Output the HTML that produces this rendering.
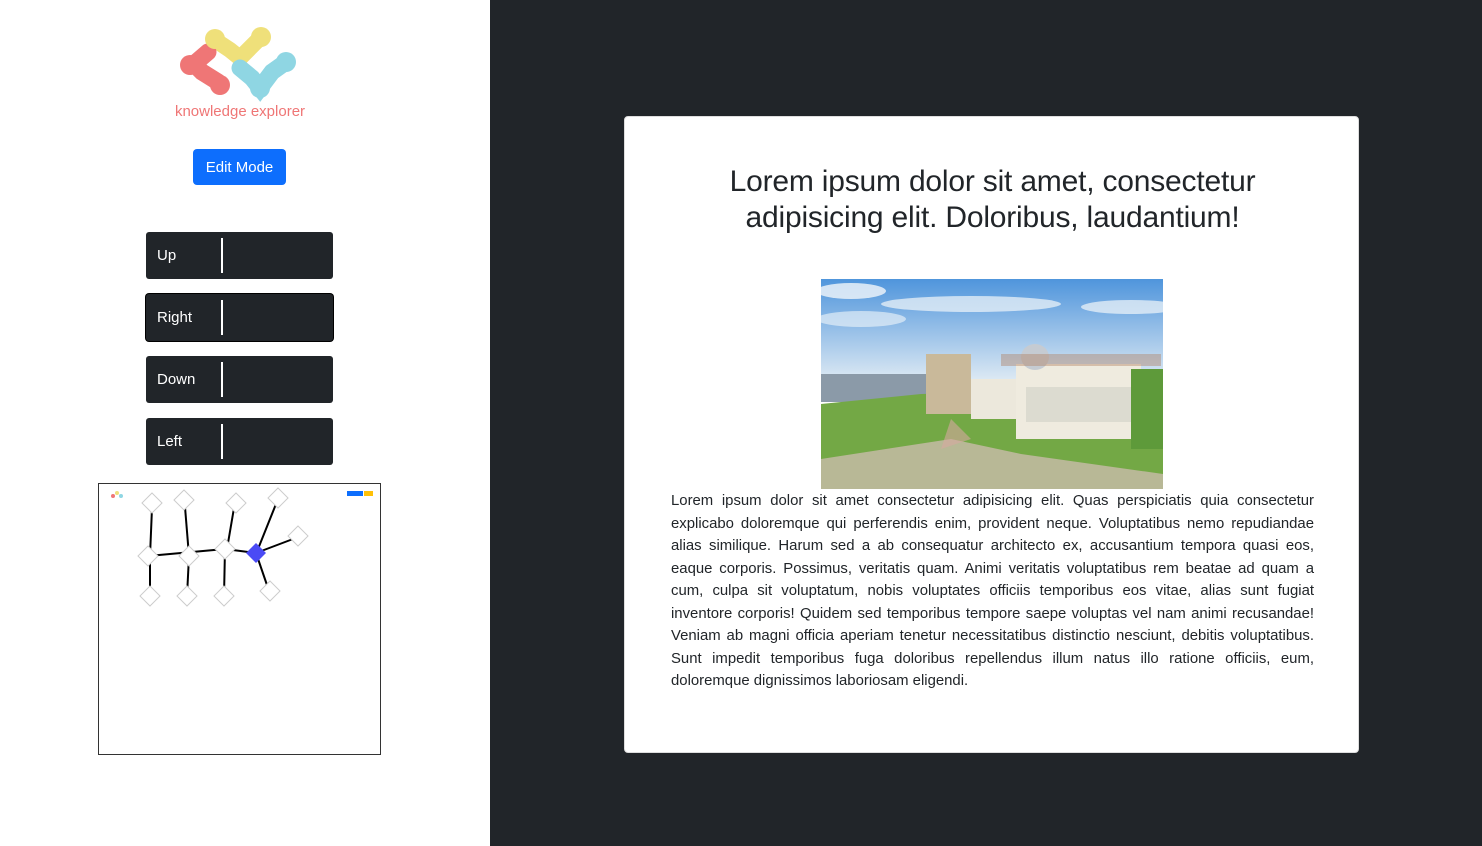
<!DOCTYPE html>
<html><head><style>
*{box-sizing:border-box;margin:0;padding:0}
body{width:1482px;height:846px;overflow:hidden;font-family:"Liberation Sans",sans-serif;background:#212529;position:relative}
.left{position:absolute;left:0;top:0;width:490px;height:846px;background:#fff}
.edit{position:absolute;left:193px;top:149px;width:93px;height:36px;background:#0d6efd;color:#fff;border-radius:4px;font-size:15px;text-align:center;line-height:37px}
.nb{position:absolute;left:146px;width:187px;height:47px;background:#212529;color:#fff;font-size:15px;border-radius:3px;line-height:48px;padding-left:11px}
.nb:after{content:"";position:absolute;left:75px;top:6px;width:2px;height:35px;background:#fff}
.focus{box-shadow:0 0 0 1px #000;}
.mini{position:absolute;left:98px;top:483px;width:283px;height:272px;border:1px solid #333;background:#fff}
.card{position:absolute;left:624px;top:116px;width:735px;height:637px;background:#fff;border-radius:4px;border:1px solid #ddd}
h1{position:absolute;left:0;top:47px;width:735px;text-align:center;font-size:30px;font-weight:normal;line-height:36px;color:#212529;letter-spacing:-0.2px}
.txt{position:absolute;left:46px;top:373px;width:643px;font-size:14.9px;line-height:22.5px;text-align:justify;color:#212529}
</style></head><body>
<div class="left">
<svg style="position:absolute;left:160px;top:20px" width="160" height="110" viewBox="0 0 160 110">
<g stroke-linecap="round" fill="none">
<path d="M55 20 L70 30 L80 38 L90 28 L100 18" stroke="#efe07a" stroke-width="16"/>
<path d="M48 32 L34 44 L42 52 L58 62" stroke="#ef7676" stroke-width="17"/>
<path d="M80 48 L92 58 L100 68 L112 52 L126 42" stroke="#8fd6e3" stroke-width="17"/>
</g>
<circle cx="55" cy="19" r="10" fill="#efe07a"/><circle cx="101" cy="17" r="10" fill="#efe07a"/>
<circle cx="30" cy="45" r="10" fill="#ef7676"/><circle cx="60" cy="65" r="10" fill="#ef7676"/>
<circle cx="126" cy="42" r="10" fill="#8fd6e3"/><circle cx="100" cy="68" r="10" fill="#8fd6e3"/>
<text x="80" y="96" text-anchor="middle" font-size="15" fill="#ef7676" font-family="Liberation Sans">knowledge explorer</text>
</svg>
<div class="edit">Edit Mode</div>
<div class="nb" style="top:232px">Up</div>
<div class="nb focus" style="top:294px">Right</div>
<div class="nb" style="top:356px">Down</div>
<div class="nb" style="top:418px">Left</div>
<div class="mini">
<svg width="283" height="272" viewBox="98 483 283 272" style="position:absolute;left:-1px;top:-1px">
<g stroke="#000" stroke-width="2">
<line x1="152" y1="508" x2="150" y2="556"/><line x1="185" y1="507" x2="189" y2="556"/><line x1="234" y1="508" x2="227" y2="549"/><line x1="276" y1="504" x2="258" y2="549"/><line x1="256" y1="553" x2="293" y2="539"/><line x1="148" y1="556" x2="225" y2="549"/><line x1="225" y1="549" x2="256" y2="553"/><line x1="150" y1="556" x2="150" y2="596"/><line x1="189" y1="556" x2="187" y2="596"/><line x1="225" y1="549" x2="224" y2="596"/><line x1="256" y1="553" x2="268" y2="588"/>
</g>
<g fill="#fff" stroke="#ccc" stroke-width="1">
<path d="M152 493l10 10-10 10-10-10z"/><path d="M184 490l10 10-10 10-10-10z"/><path d="M236 493l10 10-10 10-10-10z"/><path d="M278 488l10 10-10 10-10-10z"/><path d="M298 526l10 10-10 10-10-10z"/><path d="M148 546l10 10-10 10-10-10z"/><path d="M189 546l10 10-10 10-10-10z"/><path d="M225 539l10 10-10 10-10-10z"/><path d="M150 586l10 10-10 10-10-10z"/><path d="M187 586l10 10-10 10-10-10z"/><path d="M224 586l10 10-10 10-10-10z"/><path d="M270 581l10 10-10 10-10-10z"/>
</g>
<path d="M256 543l10 10-10 10-10-10z" fill="#4a4af5"/>
<rect x="347" y="491" width="16" height="5" fill="#0d6efd"/><rect x="364" y="491" width="9" height="5" fill="#ffc107"/>
<circle cx="113" cy="496" r="2" fill="#ef7676"/><circle cx="117" cy="493" r="2" fill="#efe07a"/><circle cx="121" cy="496" r="2" fill="#8fd6e3"/>
</svg>
</div>
</div>
<div class="card">
<h1>Lorem ipsum dolor sit amet, consectetur<br>adipisicing elit. Doloribus, laudantium!</h1>
<svg style="position:absolute;left:196px;top:162px" width="342" height="210" viewBox="0 0 342 210">
<defs><linearGradient id="s" x1="0" y1="0" x2="0" y2="1"><stop offset="0" stop-color="#4f95dc"/><stop offset="1" stop-color="#dbe8f3"/></linearGradient></defs>
<rect width="342" height="100" fill="url(#s)"/>
<ellipse cx="30" cy="12" rx="35" ry="8" fill="#f2f6fa" opacity=".8"/><ellipse cx="150" cy="25" rx="90" ry="8" fill="#f2f6fa" opacity=".7"/><ellipse cx="310" cy="28" rx="50" ry="7" fill="#f2f6fa" opacity=".7"/><ellipse cx="40" cy="40" rx="45" ry="8" fill="#f2f6fa" opacity=".6"/>
<rect y="95" width="110" height="28" fill="#8b9aa8"/>
<path d="M0 125 L100 115 L342 110 L342 210 L0 210z" fill="#73a845"/>
<path d="M0 180 L130 160 L200 175 L342 195 L342 210 L0 210z" fill="#c9bbaa" opacity=".8"/>
<path d="M130 140 L150 160 L120 170z" fill="#d5a9a0" opacity=".6"/>
<rect x="105" y="75" width="45" height="60" fill="#c9b99a"/>
<rect x="150" y="100" width="50" height="40" fill="#ece8dc"/>
<rect x="195" y="85" width="125" height="75" fill="#efebdf"/>
<ellipse cx="214" cy="78" rx="14" ry="13" fill="#c5cbd2"/>
<g fill="#c0c4b8"><rect x="205" y="108" width="110" height="35" opacity=".4"/></g>
<rect x="310" y="90" width="32" height="80" fill="#5e9a3a"/>
<rect x="180" y="75" width="160" height="12" fill="#b07a5a" opacity=".4"/>
</svg>
<div class="txt">Lorem ipsum dolor sit amet consectetur adipisicing elit. Quas perspiciatis quia consectetur explicabo doloremque qui perferendis enim, provident neque. Voluptatibus nemo repudiandae alias similique. Harum sed a ab consequatur architecto ex, accusantium tempora quasi eos, eaque corporis. Possimus, veritatis quam. Animi veritatis voluptatibus rem beatae ad quam a cum, culpa sit voluptatum, nobis voluptates officiis temporibus eos vitae, alias sunt fugiat inventore corporis! Quidem sed temporibus tempore saepe voluptas vel nam animi recusandae! Veniam ab magni officia aperiam tenetur necessitatibus distinctio nesciunt, debitis voluptatibus. Sunt impedit temporibus fuga doloribus repellendus illum natus illo ratione officiis, eum, doloremque dignissimos laboriosam eligendi.</div>
</div>
</body></html>
